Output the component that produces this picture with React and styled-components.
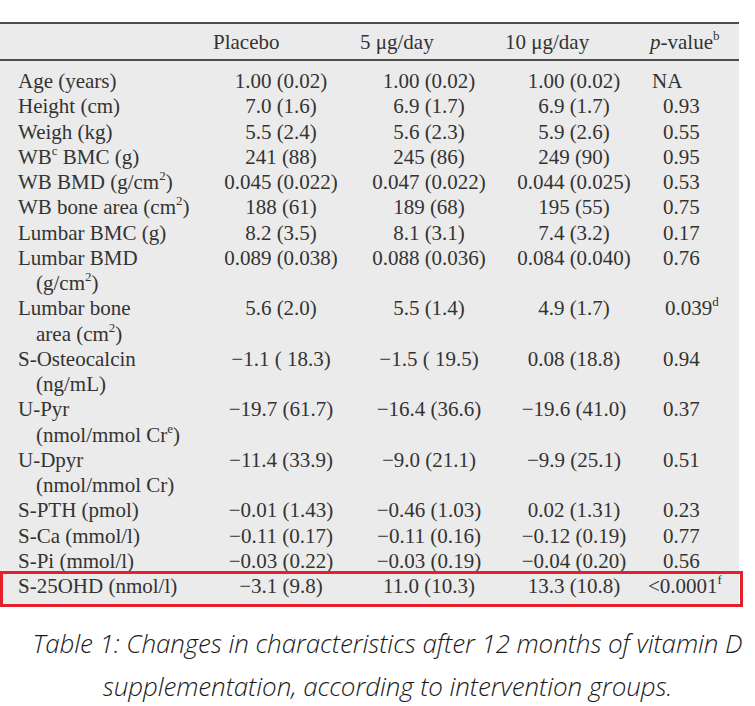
import styled, { createGlobalStyle } from "styled-components";

const Global = createGlobalStyle`
  body {
    margin: 0;
    background: #fff;
  }
`;

const Page = styled.div`
  width: 755px;
  padding-top: 22px;
`;

const TableBox = styled.div`
  width: 739px;
  background: #ebebeb;
  font-family: "Liberation Serif", "Times New Roman", serif;
  font-size: 21px;
  color: #333;
`;

const Grid = styled.div`
  display: grid;
  grid-template-columns: 212px 138px 158px 132px 99px;
  white-space: nowrap;
`;

const HeadRow = styled(Grid)`
  border-top: 2px solid #4d4d4d;
  border-bottom: 2px solid #4d4d4d;
  padding-top: 2px;
  line-height: 33px;
`;

const HeadCell = styled.div`
  margin-left: ${(p) => p.$offset || 0}px;
`;

const Body = styled.div`
  padding: 8px 0 8px;
`;

const Row = styled(Grid)`
  line-height: 25.25px;
  position: relative;

  &.marked::after {
    content: "";
    position: absolute;
    top: -3px;
    left: 0;
    right: -4px;
    bottom: -8px;
    border: 3px solid #e3202c;
  }
`;

const Label = styled.div`
  padding-left: 18px;
`;

const SubLine = styled.span`
  display: block;
  padding-left: 18px;
`;

const Value = styled.div`
  text-align: center;
`;

const PValue = styled.div`
  padding-left: ${(p) => p.$indent}px;
`;

const Sup = styled.sup`
  font-size: 13px;
  line-height: 0;
  vertical-align: 9px;
`;

const Caption = styled.p`
  margin: 15px 0 0;
  padding-left: 20px;
  text-align: center;
  font-family: "Open Sans", "Noto Sans", sans-serif;
  font-style: italic;
  font-weight: 300;
  font-size: 26px;
  line-height: 43px;
  letter-spacing: -0.1px;
  color: #1a1a1a;
`;

const rows = [
  { label: "Age (years)", v: ["1.00 (0.02)", "1.00 (0.02)", "1.00 (0.02)"], p: "NA", indent: 12 },
  { label: "Height (cm)", v: ["7.0 (1.6)", "6.9 (1.7)", "6.9 (1.7)"], p: "0.93" },
  { label: "Weigh (kg)", v: ["5.5 (2.4)", "5.6 (2.3)", "5.9 (2.6)"], p: "0.55" },
  { label: <>WB<Sup>c</Sup> BMC (g)</>, v: ["241 (88)", "245 (86)", "249 (90)"], p: "0.95" },
  { label: <>WB BMD (g/cm<Sup>2</Sup>)</>, v: ["0.045 (0.022)", "0.047 (0.022)", "0.044 (0.025)"], p: "0.53" },
  { label: <>WB bone area (cm<Sup>2</Sup>)</>, v: ["188 (61)", "189 (68)", "195 (55)"], p: "0.75" },
  { label: "Lumbar BMC (g)", v: ["8.2 (3.5)", "8.1 (3.1)", "7.4 (3.2)"], p: "0.17" },
  { label: "Lumbar BMD", sub: <>(g/cm<Sup>2</Sup>)</>, v: ["0.089 (0.038)", "0.088 (0.036)", "0.084 (0.040)"], p: "0.76" },
  { label: "Lumbar bone", sub: <>area (cm<Sup>2</Sup>)</>, v: ["5.6 (2.0)", "5.5 (1.4)", "4.9 (1.7)"], p: <>0.039<Sup>d</Sup></>, indent: 25 },
  { label: "S-Osteocalcin", sub: "(ng/mL)", v: ["−1.1 ( 18.3)", "−1.5 ( 19.5)", "0.08 (18.8)"], p: "0.94" },
  { label: "U-Pyr", sub: <>(nmol/mmol Cr<Sup>e</Sup>)</>, v: ["−19.7 (61.7)", "−16.4 (36.6)", "−19.6 (41.0)"], p: "0.37" },
  { label: "U-Dpyr", sub: "(nmol/mmol Cr)", v: ["−11.4 (33.9)", "−9.0 (21.1)", "−9.9 (25.1)"], p: "0.51" },
  { label: "S-PTH (pmol)", v: ["−0.01 (1.43)", "−0.46 (1.03)", "0.02 (1.31)"], p: "0.23" },
  { label: "S-Ca (mmol/l)", v: ["−0.11 (0.17)", "−0.11 (0.16)", "−0.12 (0.19)"], p: "0.77" },
  { label: "S-Pi (mmol/l)", v: ["−0.03 (0.22)", "−0.03 (0.19)", "−0.04 (0.20)"], p: "0.56" },
  { label: "S-25OHD (nmol/l)", v: ["−3.1 (9.8)", "11.0 (10.3)", "13.3 (10.8)"], p: <>&lt;0.0001<Sup>f</Sup></>, indent: 8, marked: true },
];

const App = () => {
  return (
    <Page>
      <Global />
      <TableBox>
        <HeadRow>
          <div />
          <HeadCell $offset={1}>Placebo</HeadCell>
          <HeadCell $offset={10}>5 μg/day</HeadCell>
          <HeadCell $offset={-3}>10 μg/day</HeadCell>
          <HeadCell $offset={10}>
            <i>p</i>-value<Sup>b</Sup>
          </HeadCell>
        </HeadRow>
        <Body>
          {rows.map((row, i) => (
            <Row key={i} className={row.marked ? "marked" : undefined}>
              <Label>
                {row.label}
                {row.sub && <SubLine>{row.sub}</SubLine>}
              </Label>
              {row.v.map((val, j) => (
                <Value key={j}>{val}</Value>
              ))}
              <PValue $indent={row.indent ?? 23}>{row.p}</PValue>
            </Row>
          ))}
        </Body>
      </TableBox>
      <Caption>
        Table 1: Changes in characteristics after 12 months of vitamin D
        supplementation, according to intervention groups.
      </Caption>
    </Page>
  );
};

export default App;
